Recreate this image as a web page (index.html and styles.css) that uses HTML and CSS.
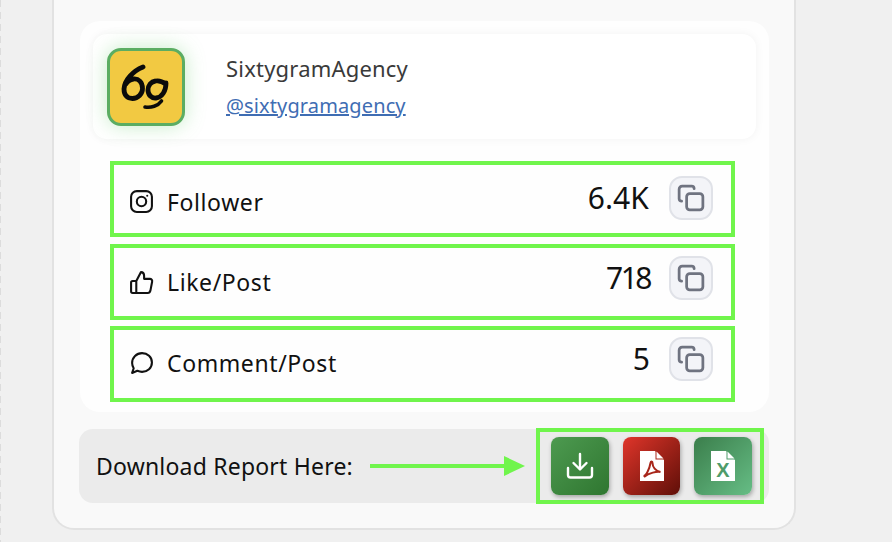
FILE: index.html
```html
<!DOCTYPE html>
<html lang="en">
<head>
<meta charset="utf-8">
<title>SixtygramAgency</title>
<link rel="stylesheet" href="styles.css">
</head>
<body>
<div class="page">
  <main class="outer">
    <section class="inner">
      <header class="profile">
        <div class="avatar">
          <svg width="56" height="50" viewBox="0 0 56 50" fill="none" stroke="#0b0b0b" stroke-width="4.800" stroke-linecap="round">
            <path d="M25 5C15 9 6.500 18 6 27C6 33 9 36.500 14.500 36.500C20 36.500 24.500 32 24.500 26.500C24.500 20 20.500 16.500 15.500 17C12 17.500 9.500 19 8 22"/>
            <path d="M47.500 22C44.500 19.500 40.500 18.500 37.500 19C33 19.500 30 23.500 30 28C30 33 33.500 36.500 38 36C44 35.500 48 29 48 21"/>
            <path d="M27 45C33 46 40 44 43.500 39" stroke-width="3.600"/>
          </svg>
        </div>
        <div class="identity">
          <div class="name">SixtygramAgency</div>
          <a class="handle" href="#">@sixtygramagency</a>
        </div>
      </header>
      <div class="rows">
        <div class="row row-a">
          <svg class="row-icon" viewBox="0 0 24 24" fill="none" stroke="#111" stroke-width="2"><rect x="2" y="2" width="20" height="20" rx="5.500"/><circle cx="12" cy="12" r="4.500"/><circle cx="17.500" cy="6.500" r="1" fill="#111" stroke="none"/></svg>
          <span class="label">Follower</span>
          <span class="value">6.4K</span>
          <button class="copy" type="button" aria-label="Copy"><svg viewBox="0 0 24 24" width="30" height="30" fill="none" stroke="#6f7380" stroke-width="2.200" stroke-linecap="round" stroke-linejoin="round"><rect x="8.500" y="8.500" width="13" height="13" rx="2.500"/><path d="M4.500 14.500C3.200 14.500 2.500 13.700 2.500 12.500V5C2.500 3.500 3.500 2.500 5 2.500H12.500C13.700 2.500 14.500 3.200 14.500 4.500"/></svg></button>
        </div>
        <div class="row row-b">
          <svg class="row-icon" viewBox="0 0 24 24" fill="none" stroke="#111" stroke-width="2" stroke-linejoin="round" stroke-linecap="round"><path d="M7 10.500V22H3.500C2.500 22 2 21.500 2 20.500V12C2 11 2.500 10.500 3.500 10.500H7L11.500 2C13.500 2 14.500 3.500 14.500 5.500V8.500H20C21.500 8.500 22.500 9.800 22.200 11.200L20.500 20C20.200 21.300 19.400 22 18 22H7"/></svg>
          <span class="label">Like/Post</span>
          <span class="value">718</span>
          <button class="copy" type="button" aria-label="Copy"><svg viewBox="0 0 24 24" width="30" height="30" fill="none" stroke="#6f7380" stroke-width="2.200" stroke-linecap="round" stroke-linejoin="round"><rect x="8.500" y="8.500" width="13" height="13" rx="2.500"/><path d="M4.500 14.500C3.200 14.500 2.500 13.700 2.500 12.500V5C2.500 3.500 3.500 2.500 5 2.500H12.500C13.700 2.500 14.500 3.200 14.500 4.500"/></svg></button>
        </div>
        <div class="row row-c">
          <svg class="row-icon" viewBox="0 0 24 24" fill="none" stroke="#111" stroke-width="2" stroke-linejoin="round"><path d="M3 22L4.500 17.500C3.500 16 3 14.500 3 12.500C3 7 7.200 3 12.500 3C17.800 3 22 7 22 12C22 17.200 17.800 21 12.500 21C10.800 21 9.500 20.600 8 20Z"/></svg>
          <span class="label">Comment/Post</span>
          <span class="value">5</span>
          <button class="copy" type="button" aria-label="Copy"><svg viewBox="0 0 24 24" width="30" height="30" fill="none" stroke="#6f7380" stroke-width="2.200" stroke-linecap="round" stroke-linejoin="round"><rect x="8.500" y="8.500" width="13" height="13" rx="2.500"/><path d="M4.500 14.500C3.200 14.500 2.500 13.700 2.500 12.500V5C2.500 3.500 3.500 2.500 5 2.500H12.500C13.700 2.500 14.500 3.200 14.500 4.500"/></svg></button>
        </div>
      </div>
    </section>
    <section class="download">
      <span class="download-text">Download Report Here:</span>
      <svg class="arrow" width="155" height="22" viewBox="0 0 155 22"><rect x="0" y="9" width="136" height="4" fill="#70f54c"/><path d="M134 1L155 11L134 21Z" fill="#70f54c"/></svg>
      <div class="buttons">
        <button class="dl dl-green" type="button" aria-label="Download"><svg width="28" height="28" viewBox="0 0 28 28" fill="none" stroke="#fff" stroke-width="2.400" stroke-linecap="round" stroke-linejoin="round"><path d="M14 2V17M7.500 11L14 17.500L20.500 11"/><path d="M2 16V23C2 24.500 3 25.500 4.500 25.500H23.500C25 25.500 26 24.500 26 23V16"/></svg></button>
        <button class="dl dl-red" type="button" aria-label="PDF"><svg width="24" height="30" viewBox="0 0 24 30"><path d="M0 0H15L24 9V30H0Z" fill="#fff"/><path d="M15.500 0L24 8.500H15.500Z" fill="#a8261a"/><path d="M16.500 0.500L23.500 7.500H16.500Z" fill="#fff"/><path d="M3.500 25C6 25 9.500 18 10.500 12C10.800 10 12.500 10 12.500 12C12.500 16 15.500 20 20.500 21C17 20.500 9 21.500 4 26" fill="none" stroke="#a8261a" stroke-width="2"/></svg></button>
        <button class="dl dl-excel" type="button" aria-label="Excel"><svg width="24" height="30" viewBox="0 0 24 30"><path d="M0 0H15L24 9V30H0Z" fill="#fff"/><path d="M15.500 0L24 8.500H15.500Z" fill="#4f9c6a"/><path d="M16.500 0.500L23.500 7.500H16.500Z" fill="#fff"/><text class="excel-x" x="12" y="26" text-anchor="middle">X</text></svg></button>
      </div>
    </section>
  </main>
</div>
</body>
</html>
```

FILE: styles.css
```css
* { box-sizing: border-box; }
html, body { margin: 0; height: 100%; }
body {
  background: #f0f0f0;
  font-family: "Noto Sans", "Liberation Sans", sans-serif;
  color: #111;
  overflow: hidden;
}
.page {
  height: 542px;
  padding: 0 96px 12px 52px;
  background-image: linear-gradient(#dcdcdc 60%, transparent 60%);
  background-size: 1px 12px;
  background-repeat: repeat-y;
}
.outer {
  height: 530px;
  background: #f9f9f9;
  border: 2px solid #e2e2e2;
  border-top: 0;
  border-radius: 0 0 22px 22px;
  padding: 21px 24px 0 26px;
}
.inner {
  width: 689px;
  height: 391px;
  background: #fefefe;
  border-radius: 20px;
  padding: 13px 13px 0;
}
.profile {
  height: 105px;
  background: #fff;
  border-radius: 14px;
  padding: 14px;
  display: flex;
  gap: 41px;
  box-shadow: 0 0 10px rgba(0,0,0,0.05);
}
.avatar {
  width: 78px;
  height: 78px;
  flex: none;
  background: #f2c942;
  border: 3px solid #5bad62;
  border-radius: 14px;
  box-shadow: 0 0 20px rgba(91,200,98,0.35);
  display: flex;
  align-items: center;
  justify-content: center;
}
.identity { padding-top: 5px; }
.name { font-size: 22px; line-height: 30px; color: #3a3a3a; letter-spacing: 0.2px; }
.handle {
  display: block;
  margin-top: 9px;
  font-size: 20px;
  line-height: 28px;
  color: #3f6db3;
  letter-spacing: 0.12px;
  text-decoration-thickness: 1.500px;
}
.rows {
  margin: 22px 21px 0 17px;
  display: grid;
  grid-template-rows: 76px 76px 76px;
  row-gap: 6.500px;
}
.row {
  border: 4px solid #70f54c;
  padding: 0 18px 0 15px;
  display: flex;
  align-items: center;
}
.row-icon { width: 25px; height: 25px; flex: none; }
.label { margin-left: 13px; font-size: 23px; letter-spacing: 0.6px; }
.value { margin-left: auto; font-size: 30px; letter-spacing: 0.1px; }
.copy {
  margin-left: 20px;
  width: 44px;
  height: 44px;
  border: 2px solid #e0e2e8;
  border-radius: 13px;
  background: #f3f4f8;
  padding: 0;
  display: flex;
  align-items: center;
  justify-content: center;
}
.row-a .row-icon, .row-a .label { margin-top: 5px; }
.row-b .row-icon, .row-b .label { margin-top: 1px; }
.row-c .row-icon, .row-c .label { margin-bottom: 3px; }
.row-a .value, .row-a .copy { margin-bottom: 3px; }
.row-b .value, .row-b .copy { margin-bottom: 8px; }
.row-c .value, .row-c .copy { margin-bottom: 11px; }
.row-b .value { letter-spacing: -2.500px; }
.row-b .value, .row-c .value { margin-right: -1px; }
.download {
  width: 690px;
  height: 74px;
  margin: 17px 0 0 -1px;
  background: #ebebeb;
  border-radius: 14px;
  padding-left: 17px;
  display: flex;
  align-items: center;
}
.download-text { font-size: 23px; width: 274px; flex: none; letter-spacing: 0.2px; }
.arrow { flex: none; }
.buttons {
  margin-left: 11px;
  width: 228px;
  height: 76px;
  border: 4px solid #70f54c;
  padding: 5px 8px 5px 11px;
  display: flex;
  gap: 14px;
  align-items: center;
  flex: none;
}
.dl {
  width: 58px;
  height: 58px;
  border: 0;
  padding: 0;
  border-radius: 8px;
  display: flex;
  align-items: center;
  justify-content: center;
  box-shadow: 1px 2px 4px rgba(0,0,0,0.3);
  flex: none;
}
.dl-green { background: linear-gradient(135deg, #4d9a50, #2f7630); }
.dl-red { width: 57px; background: linear-gradient(135deg, #e0352a, #5f0f08); }
.dl-excel { background: linear-gradient(135deg, #3b7e4b, #66bd85); }
.excel-x { font-family: "Liberation Sans", sans-serif; font-weight: 700; font-size: 20px; fill: #4f9c6a; }
```
